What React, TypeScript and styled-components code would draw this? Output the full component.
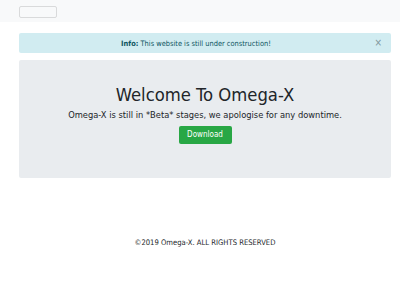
import React from 'react';
import styled, {createGlobalStyle} from 'styled-components';

const GlobalStyle = createGlobalStyle`
  html, body {
    margin: 0;
    padding: 0;
    background: #fff;
    font-family: "DejaVu Sans Condensed", "DejaVu Sans", Verdana, sans-serif;
    color: #212529;
  }
`;

const Navbar = styled.nav`
  height: 22px;
  background: #f8f9fa;
  padding: 6px 19px 0;
  box-sizing: border-box;
`;

const Toggler = styled.button`
  display: block;
  width: 38px;
  height: 12px;
  padding: 0;
  background: transparent;
  border: 1px solid #d9dadb;
  border-radius: 2px;
`;

const Container = styled.main`
  padding: 11px 9px 0 19px;
`;

const Alert = styled.div`
  position: relative;
  height: 20px;
  display: flex;
  align-items: center;
  justify-content: center;
  padding-right: 18px;
  background: #d1ecf1;
  color: #0c5460;
  font-size: 7.4px;
  border-radius: 2px;
`;

const Close = styled.span`
  position: absolute;
  right: 9px;
  top: 50%;
  transform: translateY(-50%);
  color: #7f979c;
  font-size: 10px;
  line-height: 1;
`;

const Jumbotron = styled.section`
  margin-top: 7px;
  height: 118px;
  background: #e9ecef;
  border-radius: 2px;
  display: flex;
  flex-direction: column;
  align-items: center;
  padding-top: 24px;
  box-sizing: border-box;
`;

const Title = styled.h1`
  margin: 0;
  font-size: 18.3px;
  font-weight: 400;
  line-height: 22px;
`;

const Lead = styled.p`
  margin: 2px 0 0;
  font-size: 9.25px;
  line-height: 1.5;
`;

const Button = styled.button`
  margin-top: 4px;
  width: 53px;
  height: 18px;
  padding: 0;
  border: none;
  border-radius: 2px;
  background: #28a745;
  color: #fff;
  font-family: inherit;
  font-size: 8px;
`;

const Footer = styled.footer`
  margin-top: 60px;
  text-align: center;
  font-size: 7.6px;
  color: #212529;
`;

const App: React.FunctionComponent = () => {
    return (
        <>
            <GlobalStyle/>
            <Navbar>
                <Toggler aria-label="menu"/>
            </Navbar>
            <Container>
                <Alert>
                    <span><b>Info:</b> This website is still under construction!</span>
                    <Close>×</Close>
                </Alert>
                <Jumbotron>
                    <Title>Welcome To Omega-X</Title>
                    <Lead>Omega-X is still in *Beta* stages, we apologise for any downtime.</Lead>
                    <Button>Download</Button>
                </Jumbotron>
                <Footer>©2019 Omega-X. ALL RIGHTS RESERVED</Footer>
            </Container>
        </>
    );
}
export default App;
